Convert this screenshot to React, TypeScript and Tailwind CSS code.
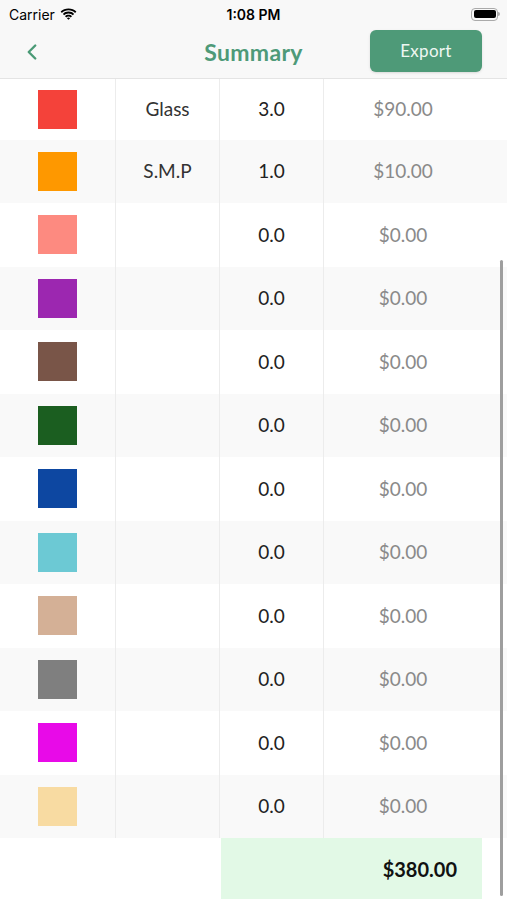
import { ChevronLeft } from "lucide-react";

type Row = { color: string; name: string; qty: string; price: string };

const rows: Row[] = [
  { color: "#f4423a", name: "Glass", qty: "3.0", price: "$90.00" },
  { color: "#fe9800", name: "S.M.P", qty: "1.0", price: "$10.00" },
  { color: "#fd8a80", name: "", qty: "0.0", price: "$0.00" },
  { color: "#9c27b0", name: "", qty: "0.0", price: "$0.00" },
  { color: "#795548", name: "", qty: "0.0", price: "$0.00" },
  { color: "#1b5e20", name: "", qty: "0.0", price: "$0.00" },
  { color: "#0d47a1", name: "", qty: "0.0", price: "$0.00" },
  { color: "#6cc9d4", name: "", qty: "0.0", price: "$0.00" },
  { color: "#d4b096", name: "", qty: "0.0", price: "$0.00" },
  { color: "#7f7f7f", name: "", qty: "0.0", price: "$0.00" },
  { color: "#e80ae8", name: "", qty: "0.0", price: "$0.00" },
  { color: "#f8dba2", name: "", qty: "0.0", price: "$0.00" },
];

function StatusBar() {
  return (
    <div className="h-[28px] flex items-center justify-between px-[9px] text-[14px] text-black font-['Inter',sans-serif] relative">
      <div className="flex items-center gap-[5px]">
        <span>Carrier</span>
        <svg width="17" height="12" viewBox="0 0 17 12">
          <path d="M8.5 2.2c2.6 0 4.9 1 6.6 2.7l1.3-1.3C14.4 1.6 11.6.4 8.5.4S2.6 1.6.6 3.6l1.3 1.3C3.6 3.2 5.9 2.2 8.5 2.2z" fill="#000" />
          <path d="M8.5 5.4c1.7 0 3.2.7 4.3 1.8l1.3-1.3C12.7 4.4 10.7 3.6 8.5 3.6S4.3 4.4 2.9 5.9l1.3 1.3c1.1-1.1 2.6-1.8 4.3-1.8z" fill="#000" />
          <path d="M8.5 8.6c.9 0 1.6.3 2.2.9l1.3-1.3c-.9-.9-2.1-1.4-3.5-1.4S5.9 7.3 5 8.2l1.3 1.3c.6-.6 1.3-.9 2.2-.9zM8.5 11.8l1.6-1.6c-.4-.4-1-.7-1.6-.7s-1.2.3-1.6.7z" fill="#000" />
        </svg>
      </div>
      <span className="absolute left-1/2 -translate-x-1/2 font-semibold">1:08 PM</span>
      <div className="flex items-center mr-[-2px]">
        <div className="w-[27px] h-[13px] rounded-[4px] border border-[#aaa] p-[1.5px]">
          <div className="w-full h-full rounded-[2px] bg-black" />
        </div>
        <div className="w-[2px] h-[4px] bg-[#aaa] rounded-r-sm" />
      </div>
    </div>
  );
}

function NavBar() {
  return (
    <div className="h-[51px] flex items-center justify-between border-b border-[#e4e4e4] relative pl-[19px] pr-[25px]">
      <ChevronLeft size={26} strokeWidth={2.2} className="text-[#4a9a76] -mt-[3px]" />
      <span className="absolute left-1/2 -translate-x-1/2 top-[7px] text-[23px] font-bold tracking-[0.3px] text-[#4e9a78] font-['Lato',sans-serif]">
        Summary
      </span>
      <button className="w-[112px] h-[42px] -mt-[4px] rounded-[6px] bg-[#4e9a78] text-[#eef7f2] text-[17px] tracking-[0.3px] font-['Lato',sans-serif] shadow-sm">
        Export
      </button>
    </div>
  );
}

export default function App() {
  return (
    <div className="w-[507px] h-[900px] overflow-hidden bg-white relative font-['Lato',sans-serif]">
      <div className="bg-[#f8f8f8]">
        <StatusBar />
        <NavBar />
      </div>
      <div>
        {rows.map((r, i) => (
          <div
            key={i}
            className={`${i === 0 ? "h-[60.5px]" : "h-[63.5px]"} grid grid-cols-[116px_104px_104px_1fr] ${i % 2 === 1 ? "bg-[#f9f9f9]" : "bg-white"}`}
          >
            <div className="flex items-center justify-center border-r border-[#ececec]">
              <div className="w-[39px] h-[39px]" style={{ backgroundColor: r.color }} />
            </div>
            <div className="flex items-center justify-center border-r border-[#ececec] text-[19px] text-[#333]">
              {r.name}
            </div>
            <div className="flex items-center justify-center border-r border-[#ececec] text-[19px] text-[#222]">
              {r.qty}
            </div>
            <div className="flex items-center justify-center text-[19px] text-[#8a8a8a] pr-[25px]">
              {r.price}
            </div>
          </div>
        ))}
        <div className="h-[61px] grid grid-cols-[221px_261px_1fr]">
          <div />
          <div className="bg-[#e2f9e6] flex items-center justify-end pr-[25px] text-[20px] font-bold text-[#111]">
            $380.00
          </div>
          <div />
        </div>
      </div>
      <div className="absolute right-[4px] top-[260px] h-[636px] w-[3px] rounded-full bg-[#9e9e9e]" />
    </div>
  );
}
